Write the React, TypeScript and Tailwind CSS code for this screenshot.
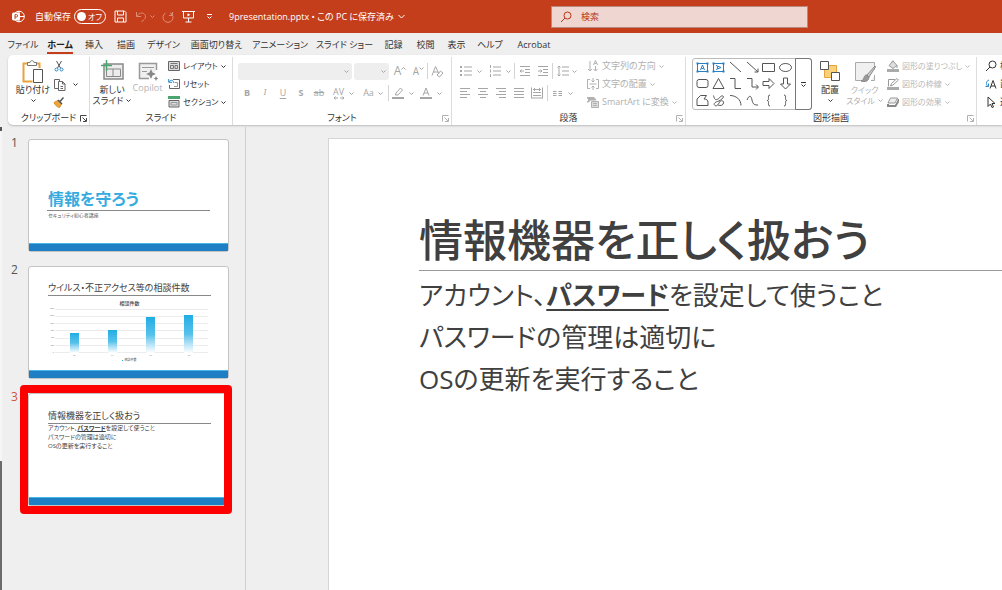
import type { ReactNode } from "react"

const tabs = [
  { label: "ファイル", width: "w-[38px]" },
  { label: "ホーム", width: "w-[36px]", active: true },
  { label: "挿入", width: "w-[32px]" },
  { label: "描画", width: "w-[32px]" },
  { label: "デザイン", width: "w-[43px]" },
  { label: "画面切り替え", width: "w-[63px]" },
  { label: "アニメーション", width: "w-[64px]" },
  { label: "スライド ショー", width: "w-[65px]" },
  { label: "記録", width: "w-[33px]" },
  { label: "校閲", width: "w-[31px]" },
  { label: "表示", width: "w-[31px]" },
  { label: "ヘルプ", width: "w-[36px]" },
  { label: "Acrobat", width: "w-[52px]" },
]

const chartValues = [
  { name: "R3", value: 540 },
  { name: "R4", value: 640 },
  { name: "R5", value: 990 },
  { name: "R6", value: 1040 },
]

const chartTicks = [1200, 1000, 800, 600, 400, 200, 0]

type IconProps = { children: ReactNode; className?: string; box?: string }

function Icon({ children, className = "size-3", box = "0 0 12 12" }: IconProps) {
  return (
    <svg viewBox={box} className={`shrink-0 ${className}`} fill="none" stroke="currentColor" aria-hidden="true">
      {children}
    </svg>
  )
}

function Chevron({ className = "" }: { className?: string }) {
  return (
    <Icon className={`size-[5px] ${className}`} box="0 0 5 5">
      <path d="M.5 1.5l2 2 2-2" />
    </Icon>
  )
}

function Tool({ label, className, children }: { label: string; className: string; children: ReactNode }) {
  return (
    <button type="button" aria-label={label} className={`flex h-4 shrink-0 items-center justify-center ${className}`}>
      {children}
    </button>
  )
}

function Divider() {
  return <span className="h-4 w-px shrink-0 bg-[#d4d4d4]" />
}

type GroupProps = { label: string; className: string; launcher?: "dark" | "light"; children: ReactNode }

function Group({ label, className, launcher, children }: GroupProps) {
  return (
    <section className={`flex shrink-0 flex-col border-r border-[#dcdcdc] ${className}`} aria-label={label}>
      <div className="flex h-[54px]">{children}</div>
      <div className="grid h-[14px] grid-cols-[10px_1fr_10px] items-center">
        <span />
        <span className="text-center text-[9px] leading-[14px]">{label}</span>
        {launcher && (
          <button
            type="button"
            aria-label={`${label}の詳細`}
            className={`mr-[2px] justify-self-end ${launcher === "dark" ? "text-[#444]" : "text-[#b0b0b0]"}`}
          >
            <Icon className="size-[7px]" box="0 0 7 7">
              <path d="M6.5 .5H.5V6.5M2.5 2.5L6 6M6.5 3v3.5H3" />
            </Icon>
          </button>
        )}
      </div>
    </section>
  )
}

function RowButton({ icon, label, arrow = true }: { icon: ReactNode; label: string; arrow?: boolean }) {
  return (
    <button type="button" className="flex h-[18px] shrink-0 items-center gap-[3px] whitespace-nowrap">
      {icon}
      <span>{label}</span>
      {arrow && <Chevron />}
    </button>
  )
}

function TitleBar() {
  return (
    <header className="flex h-[33px] shrink-0 items-center bg-[#c43e1c] text-[9px] text-white">
      <Icon className="ml-3 size-[13px]" box="0 0 13 13">
        <circle cx="7" cy="6.5" r="5.3" />
        <path d="M7 1v5.5h5.3M7 6.5v5.3" />
        <rect x=".5" y="3" width="7" height="7" rx="1" fill="white" />
        <path d="M3 9V4.6h1.4a1.2 1.2 0 010 2.4H3" stroke="#c43e1c" />
      </Icon>
      <label htmlFor="autosave" className="ml-[10px] w-[39px] whitespace-nowrap">
        自動保存
      </label>
      <span className="flex h-[15px] w-8 items-center rounded-full border border-white">
        <input
          id="autosave"
          type="checkbox"
          role="switch"
          className="ml-[2px] size-[9px] shrink-0 appearance-none rounded-full bg-white"
        />
        <span className="ml-[2px] whitespace-nowrap text-[8px]">オフ</span>
      </span>
      <Tool label="上書き保存" className="ml-[7px] w-[15px]">
        <Icon className="size-[13px]" box="0 0 13 13">
          <path d="M1 1h9.5L12 2.5V12H1zM3.5 1v4h6V1M3.5 12V8h6v4" />
        </Icon>
      </Tool>
      <Tool label="元に戻す" className="ml-[6px] w-[14px] text-[#e08d77]">
        <Icon>
          <path d="M1.5 1v4.5H6M1.8 5.2C4 1.8 7.5 1.2 9.3 3c2 2 1.300 4.200-.8 6L6.500 11" />
        </Icon>
      </Tool>
      <Chevron className="ml-[2px] text-[#e08d77]" />
      <Tool label="やり直し" className="ml-[6px] w-[14px] text-[#e08d77]">
        <Icon>
          <path d="M10.500 1v3.500H7M3.500 2A5 5 0 108.500 2l2 2.300" />
        </Icon>
      </Tool>
      <Tool label="最初から開始" className="ml-[6px] w-[14px]">
        <Icon className="size-[13px]" box="0 0 13 13">
          <path d="M0 1.500h13M1.500 1.500v6.500h10V1.500M6.500 8v4M3.500 12h6" />
          <path d="M5.500 3.200v3.200L8.300 4.800z" fill="currentColor" stroke="none" />
        </Icon>
      </Tool>
      <Tool label="クイック アクセス" className="ml-[6px] w-4">
        <Icon className="size-[7px]" box="0 0 7 7">
          <path d="M1 1.500h5M1.500 3.500l2 2 2-2" />
        </Icon>
      </Tool>
      <button type="button" className="ml-3 flex w-[322px] items-center gap-1 whitespace-nowrap">
        9presentation.pptx • この PC に保存済み
        <Icon className="size-[7px]" box="0 0 7 7">
          <path d="M.5 2l3 3 3-3" />
        </Icon>
      </button>
      <label className="flex h-[22px] w-[257px] items-center gap-[9px] border border-[#b98a7d] bg-[#efd6d1] px-2 text-[#b7371a]">
        <Icon>
          <circle cx="7.500" cy="4.500" r="3.500" />
          <path d="M5 7L1 11" />
        </Icon>
        <input
          type="search"
          aria-label="検索"
          placeholder="検索"
          className="min-w-0 flex-1 bg-transparent outline-none placeholder:text-[#b7371a]"
        />
      </label>
    </header>
  )
}

function TabStrip() {
  return (
    <nav className="flex h-[22px] shrink-0 items-center pl-1 pt-px text-[9px] text-[#333]">
      {tabs.map((tab) => (
        <button
          key={tab.label}
          type="button"
          className={`flex shrink-0 justify-center whitespace-nowrap ${tab.width} ${tab.active ? "font-bold text-[#222]" : ""}`}
        >
          <span className={`leading-[14px] ${tab.active ? "border-b-2 border-[#c43e1c] pt-[2px]" : ""}`}>
            {tab.label}
          </span>
        </button>
      ))}
    </nav>
  )
}

function ClipboardGroup() {
  return (
    <Group label="クリップボード" className="w-[82px]" launcher="dark">
      <button type="button" className="ml-[6px] flex w-[38px] flex-col items-center pt-[3px] text-[9px] leading-3">
        <Icon className="h-6 w-[22px]" box="0 0 22 24">
          <path d="M5.500 3.500H1.500v18h9M14.500 3.500h3V8" stroke="#e8a33d" strokeWidth="2" />
          <path d="M5.500 5.500v-3h2.500C8.500 0 11.500 0 12 2.500h2.500v3z" stroke="#777" fill="white" />
          <path d="M11.500 9.500h9v13h-9z" stroke="#555" fill="white" />
        </Icon>
        <span className="whitespace-nowrap">貼り付け</span>
        <Chevron className="mt-[2px]" />
      </button>
      <div className="flex flex-col">
        <Tool label="切り取り" className="h-[18px] w-[14px]">
          <Icon>
            <path d="M3.500 1L7.500 8M8.500 1L4.500 8" stroke="#555" />
            <circle cx="3.500" cy="9.500" r="1.500" stroke="#2b88c8" />
            <circle cx="8.500" cy="9.500" r="1.500" stroke="#2b88c8" />
          </Icon>
        </Tool>
        <Tool label="コピー" className="h-[18px] w-[14px]">
          <Icon className="size-[13px]" box="0 0 13 13">
            <path
              d="M5 10.500H1.500v-9h5V3M5.500 3.500h4l2.500 2.500v6.500H5.500zM9.500 3.500V6H12M7.500 8.500H10M7.500 10.500H10"
              stroke="#666"
            />
          </Icon>
        </Tool>
        <Tool label="書式のコピー" className="h-[18px] w-[14px]">
          <Icon>
            <path d="M1 6.500l4-2 3.500 3.500-2 3.500C4 11 2 9 1 6.500z" fill="#eda63d" stroke="#d98a1f" />
            <path d="M5 4l4 4M7 5.500L10.500 1.500" stroke="#555" strokeWidth="1.500" />
          </Icon>
        </Tool>
      </div>
      <Chevron className="ml-[7px] mt-[25px]" />
    </Group>
  )
}

function SlidesGroup() {
  return (
    <Group label="スライド" className="w-[143px]">
      <button type="button" className="ml-1 flex w-[36px] flex-col items-center pt-[3px] text-[9px] leading-[11px]">
        <Icon className="h-[22px] w-[23px]" box="0 0 23 22">
          <path d="M3 4h19v15H3z" fill="#ececec" stroke="#888" strokeWidth="1.500" />
          <path d="M5 9h15M12 9v8M5.500 9.500v7h14v-7" stroke="#888" />
          <path d="M5.500 0v11M0 5.500h11" stroke="#4ba56f" strokeWidth="1.500" />
        </Icon>
        <span className="mt-[2px]">新しい</span>
        <span className="flex items-center gap-[3px] whitespace-nowrap">
          スライド
          <Chevron />
        </span>
      </button>
      <button type="button" className="flex w-[35px] flex-col items-center pt-1 text-[9px] leading-3 text-[#b4b4b4]">
        <Icon className="h-[21px] w-5" box="0 0 20 21">
          <path d="M18.500 9V2.500h-17v15H11" stroke="#999" strokeWidth="1.500" fill="#f0f0f0" />
          <path d="M4 6.500h12M4 10.500h5" stroke="#999" />
          <path d="M13 8l1.500 3.500L18 13l-3.500 1.500L13 18l-1.500-3.500L8 13l3.500-1.500z" fill="#888" stroke="none" />
          <path d="M18 15l.8 1.700 1.700.8-1.700.8L18 20l-.8-1.700-1.700-.8 1.700-.8z" fill="#888" stroke="none" />
        </Icon>
        <span>Copilot</span>
      </button>
      <div className="ml-[3px] flex flex-col text-[8px]">
        <RowButton
          label="レイアウト"
          icon={
            <Icon>
              <path d="M.5 1.500h11v9H.5z" fill="#ddd" stroke="#666" />
              <path d="M2.500 3.500h7M2.500 5.500h3v3h-3zM7 5.500h2.500v3H7z" stroke="#777" />
            </Icon>
          }
        />
        <RowButton
          label="リセット"
          arrow={false}
          icon={
            <Icon>
              <path d="M5 1.500h6.500v9H1.500V7" stroke="#666" />
              <path d="M6 8.500h3.500v-4H7" stroke="#999" />
              <path d="M.7 1v3.300H4M1 4C2.500 1.500 5 1.500 6 5" stroke="#2b88c8" />
            </Icon>
          }
        />
        <RowButton
          label="セクション"
          icon={
            <Icon>
              <path d="M0 1.500h12" stroke="#4ba56f" strokeWidth="3" />
              <path d="M1 4.500h10v6.500H1z" fill="#ddd" stroke="#666" />
              <path d="M3 6.500h6v2.500H3z" stroke="#999" />
            </Icon>
          }
        />
      </div>
    </Group>
  )
}

function FontGroup() {
  return (
    <Group label="フォント" className="w-[219px]" launcher="light">
      <div className="flex flex-col pl-[5px] pt-[5px] text-[#a6a6a6]">
        <div className="flex h-[18px] items-center">
          <select
            aria-label="フォント名"
            disabled
            className="h-[17px] w-[114px] appearance-none rounded-[3px] bg-[#eee]"
          />
          <Chevron className="-ml-2 mr-[5px]" />
          <select
            aria-label="フォント サイズ"
            disabled
            className="h-[17px] w-[35px] appearance-none rounded-[3px] bg-[#eee]"
          />
          <Chevron className="-ml-2 mr-1" />
          <Tool label="フォント サイズの拡大" className="w-[20px]">
            <span className="text-[12px]">A</span>
            <Chevron className="mb-[6px] rotate-180" />
          </Tool>
          <Tool label="フォント サイズの縮小" className="w-[17px]">
            <span className="text-[10px]">A</span>
            <Chevron className="mb-[6px]" />
          </Tool>
          <Divider />
          <Tool label="書式のクリア" className="w-[19px]">
            <Icon className="size-[13px]" box="0 0 13 13">
              <path d="M1 10.500L4.500 1.500 8 9M2.500 7H7M6 10l3.500-4 2.500 2-3.500 4z" />
            </Icon>
          </Tool>
        </div>
        <div className="mt-1 flex h-[18px] items-center text-[9px]">
          <Tool label="太字" className="w-[18px]">
            <span className="font-bold">B</span>
          </Tool>
          <Tool label="斜体" className="w-[18px]">
            <span className="font-serif italic">I</span>
          </Tool>
          <Tool label="下線" className="w-[18px]">
            <span className="underline underline-offset-2">U</span>
          </Tool>
          <Tool label="文字の影" className="w-[18px]">
            <span className="font-bold">S</span>
          </Tool>
          <Tool label="取り消し線" className="w-[18px]">
            <span className="line-through">ab</span>
          </Tool>
          <Tool label="文字の間隔" className="w-[30px] gap-1">
            <span className="flex flex-col items-center leading-[9px]">
              AV
              <Icon className="h-1 w-3" box="0 0 12 4">
                <path d="M2.500 .5L1 2l1.500 1.500M1 2h4M9.500 .5L11 2 9.500 3.500M11 2H7" />
              </Icon>
            </span>
            <Chevron />
          </Tool>
          <Tool label="文字種の変換" className="w-[30px] gap-1">
            <span>Aa</span>
            <Chevron />
          </Tool>
          <Divider />
          <Tool label="蛍光ペン" className="w-[28px] gap-[5px]">
            <Icon>
              <path d="M4 6l4.500-5L10.500 3 6 8H3.500zM3 8l1-1" />
              <path d="M0 11h12" strokeWidth="2" />
            </Icon>
            <Chevron />
          </Tool>
          <Tool label="フォントの色" className="w-[28px] gap-[5px]">
            <Icon>
              <path d="M3 8.500L6 1l3 7.500M4 6h4" />
              <path d="M0 11h12" strokeWidth="2" />
            </Icon>
            <Chevron />
          </Tool>
        </div>
      </div>
    </Group>
  )
}

const alignments = [
  { label: "左揃え", d: "M1 1.500h10M1 4.500h7M1 7.500h10M1 10.500h7" },
  { label: "中央揃え", d: "M1 1.500h10M3 4.500h6M1 7.500h10M3 10.500h6" },
  { label: "右揃え", d: "M1 1.500h10M4 4.500h7M1 7.500h10M4 10.500h7" },
  { label: "両端揃え", d: "M1 1.500h10M1 4.500h10M1 7.500h10M1 10.500h10" },
  { label: "均等割り付け", d: "M.5 .5v11M11.500 .5v11M2 2.500h8M2 5.500h8M2 8.500h8M3.500 1v3M8.500 1v3M1 11h10" },
]

function ParagraphGroup() {
  return (
    <Group label="段落" className="w-[234px]" launcher="light">
      <div className="flex w-[135px] shrink-0 flex-col pl-1 pt-[5px] text-[#a6a6a6]">
        <div className="flex h-[18px] items-center">
          <Tool label="箇条書き" className="w-[29px] gap-[5px]">
            <Icon>
              <path d="M4 2h8M4 6h8M4 10h8" />
              <path d="M0 2h2M0 6h2M0 10h2" strokeWidth="2" />
            </Icon>
            <Chevron />
          </Tool>
          <Tool label="段落番号" className="w-[29px] gap-[5px]">
            <Icon>
              <path d="M4 2h8M4 6h8M4 10h8M1.500 0v3M1.500 4.500v3M1.500 9v3" />
            </Icon>
            <Chevron />
          </Tool>
          <Divider />
          <Tool label="インデントを減らす" className="w-[19px]">
            <Icon>
              <path d="M1 1.500h10M6 4.500h5M6 7.500h5M1 10.500h10M5 6H1M2.500 4.500L1 6l1.500 1.500" />
            </Icon>
          </Tool>
          <Tool label="インデントを増やす" className="w-[18px]">
            <Icon>
              <path d="M1 1.500h10M6 4.500h5M6 7.500h5M1 10.500h10M1 6h4M3.500 4.500L5 6 3.500 7.500" />
            </Icon>
          </Tool>
          <Divider />
          <Tool label="行間" className="w-[28px] gap-[3px]">
            <Icon>
              <path d="M5 2h7M5 6h7M5 10h7M2 1v10M.5 2.500L2 1l1.500 1.500M.5 9.500L2 11l1.500-1.500" />
            </Icon>
            <Chevron />
          </Tool>
        </div>
        <div className="mt-1 flex h-[18px] items-center">
          {alignments.map((item) => (
            <Tool key={item.label} label={item.label} className="w-[18px]">
              <Icon>
                <path d={item.d} />
              </Icon>
            </Tool>
          ))}
          <span className="w-px" />
          <Divider />
          <Tool label="段組み" className="w-[29px] gap-[5px]">
            <Icon className="size-[11px]" box="0 0 11 11">
              <path d="M1 3.500h3.500M6.500 3.500H10M1 5.500h3.500M6.500 5.500H10M1 7.500h3.500M6.500 7.500H10" />
            </Icon>
            <Chevron />
          </Tool>
        </div>
      </div>
      <div className="flex flex-col text-[9px] text-[#b0b0b0]">
        <RowButton
          label="文字列の方向"
          icon={
            <Icon>
              <path d="M3 1v10M1 9l2 2 2-2M8.500 6v5M6.500 9l2 2 2-2M6.500 5l2-4.500 2 4.500M7.500 3.500h2" />
            </Icon>
          }
        />
        <RowButton
          label="文字の配置"
          icon={
            <Icon>
              <path d="M3 1.500H.5v9H3M9 1.500h2.500v9H9M2.500 6h7M6 0v4M4.500 2.500L6 4l1.500-1.500M6 12V8M4.500 9.500L6 8l1.500 1.500" />
            </Icon>
          }
        />
        <RowButton
          label="SmartArt に変換"
          icon={
            <Icon>
              <path d="M0 1.500h7l2 2.500H3.500L1.500 6H0L2 4z" fill="currentColor" />
              <path d="M4.500 5.500h7v6h-7zM6 7.500h4M6 9.500h4" fill="#ddd" />
            </Icon>
          }
        />
      </div>
    </Group>
  )
}

const shapes = [
  { label: "横書きテキスト", blue: true, d: "M1.500 2.500h10v8h-10zM4.500 9L6.500 4l2 5M5.500 7.500h2" },
  { label: "縦書きテキスト", blue: true, d: "M1.500 2.500h10v8h-10zM4 4.500l5 2-5 2M5.500 5.500v2" },
  { label: "線", d: "M1 1l11 10" },
  { label: "矢印", d: "M1 1l11 10M12 7.500V11H8.500" },
  { label: "四角形", d: "M.5 2.500h12v8H.5z" },
  { label: "楕円", d: "M.5 6.500a6 4 0 0112 0a6 4 0 01-12 0z" },
  { label: "角丸四角形", d: "M3 2.500h7a2 2 0 012 2v4a2 2 0 01-2 2H3a2 2 0 01-2-2v-4a2 2 0 012-2z" },
  { label: "三角形", d: "M6.500 1.500l5.500 10H1z" },
  { label: "カギ線", d: "M1 1.500h5v10h6" },
  { label: "カギ線矢印", d: "M1 1.500h5v8.500h6M10 7.500l2.500 2.500-2.500 2.500" },
  { label: "右矢印", d: "M1 4.500h6v-3l5 5-5 5v-3H1z" },
  { label: "下矢印", d: "M4.500 1v6h-3l5 5 5-5h-3V1z" },
  { label: "フリーフォーム", d: "M1 11.500V5l3.500-3.500h6L8 5c2.500 0 4 1 4 3.500v3z" },
  { label: "フリーハンド", d: "M1.500 1.500C2.500 5 3 6 5 5.500S9 1 11 2 8 7 5.500 7.500 1 10 3 11.500 7 9 8 7.500s4-1 3.500 1.500S8.500 12 6 11" },
  { label: "円弧", d: "M1 1.500c6 0 11 4 11 10" },
  { label: "曲線", d: "M1 6c2-5 4-5 5 0s3 5 6 5" },
  { label: "左中かっこ", d: "M8 1C6 1 6.500 3 6.500 4.500S6 6.500 5 6.500c1 0 1.500.5 1.500 2S6 12 8 12" },
  { label: "右中かっこ", d: "M5 1c2 0 1.500 2 1.500 3.500s.5 2 1.500 2c-1 0-1.500.5-1.500 2S7 12 5 12" },
]

function DrawingGroup() {
  return (
    <Group label="図形描画" className="w-[291px]" launcher="light">
      <div className="ml-[6px] mt-px flex h-[52px] w-[120px] shrink-0 rounded-[3px] border border-[#bbb]">
        <div className="grid flex-1 grid-cols-6 grid-rows-3 place-items-center px-px">
          {shapes.map((shape) => (
            <button
              key={shape.label}
              type="button"
              aria-label={shape.label}
              className={shape.blue ? "text-[#2b7fc0]" : "text-[#555]"}
            >
              <Icon className="size-[13px]" box="0 0 13 13">
                <path d={shape.d} />
                {shape.blue && <path d="M.5 2.500h2M10.500 2.500h2M.5 10.500h2M10.500 10.500h2" strokeWidth="2" />}
              </Icon>
            </button>
          ))}
        </div>
        <button
          type="button"
          aria-label="その他の図形"
          className="-my-px -mr-px flex w-[17px] items-center justify-center rounded-r-[3px] border border-[#777]"
        >
          <Icon className="size-[7px]" box="0 0 7 7">
            <path d="M1 1.500h5M1.500 3.500l2 2 2-2" />
          </Icon>
        </button>
      </div>
      <button type="button" className="ml-1 flex w-7 shrink-0 flex-col items-center pt-[3px] text-[9px] leading-3">
        <Icon className="h-6 w-[21px]" box="0 0 21 24">
          <path d="M4.500 5.500h12v12h-12z" fill="#fbd27c" stroke="#e8a33d" />
          <path d="M.5 1.500h8v8h-8zM11.500 12.500h8v8h-8z" fill="white" stroke="#555" />
        </Icon>
        <span>配置</span>
        <Chevron className="mt-[2px]" />
      </button>
      <button
        type="button"
        className="flex w-[41px] shrink-0 flex-col items-center pt-1 text-[8px] leading-[11px] text-[#b0b0b0]"
      >
        <Icon className="h-[22px] w-[22px]" box="0 0 22 22">
          <path d="M12 19.500H1.500v-18h19v7M20.500 14v5.500H17" fill="#f0f0f0" stroke="#aaa" />
          <path d="M21 5l-8 9 2 2 6.500-10z" fill="#ccc" stroke="#888" />
          <path d="M12.500 14c-3 0-2 5-5.500 6 4 1.500 8 0 8-4z" fill="#999" stroke="#888" />
        </Icon>
        <span className="mt-px whitespace-nowrap">クイック</span>
        <span className="flex items-center gap-[3px] whitespace-nowrap">
          スタイル
          <Chevron />
        </span>
      </button>
      <div className="ml-[2px] flex flex-col text-[8px] text-[#b8b8b8]">
        <RowButton
          label="図形の塗りつぶし"
          icon={
            <Icon>
              <path d="M2 5.500L6 1l4 4.500-4 3zM10 5v3M4 3l2-2.500" fill="#ddd" stroke="#999" />
              <path d="M0 10.500h12" strokeWidth="3" stroke="#aaa" />
            </Icon>
          }
        />
        <RowButton
          label="図形の枠線"
          icon={
            <Icon>
              <path d="M8 1.500H1.500v7M3.500 8l1-2.500L10 .5l1.500 1.500L6 7z" stroke="#999" />
              <path d="M0 10.500h12" strokeWidth="3" stroke="#aaa" />
            </Icon>
          }
        />
        <RowButton
          label="図形の効果"
          icon={
            <Icon>
              <path d="M3.500 2h7l-2.500 5H1z" fill="#eee" stroke="#999" />
              <path d="M1 8v2h7.500L11.500 5V3" stroke="#888" strokeWidth="2" />
            </Icon>
          }
        />
      </div>
    </Group>
  )
}

function EditGroup() {
  return (
    <section className="flex min-w-0 flex-1 flex-col overflow-hidden pl-2 text-[9px]" aria-label="編集">
      <RowButton
        label="検索"
        arrow={false}
        icon={
          <Icon>
            <circle cx="7.500" cy="4.500" r="3.500" />
            <path d="M5 7L1 11" />
          </Icon>
        }
      />
      <RowButton
        label="置換"
        icon={
          <Icon>
            <path d="M5 10.500l3-8 3 8M6 8h4" />
            <path d="M4 2C1 3 .5 6 3 8.500M3.500 5.500v3H.5" stroke="#2b88c8" />
          </Icon>
        }
      />
      <RowButton
        label="選択"
        icon={
          <Icon>
            <path d="M3 1v9.500l2.500-2.500L7 11.500 8.500 11 7 7.500h3z" />
          </Icon>
        }
      />
    </section>
  )
}

function SlideBand() {
  return <div className="mt-auto h-2 shrink-0 border-t border-[#4bb4e6] bg-[#1f7fc4]" />
}

function SlideChart() {
  return (
    <figure className="mt-1 flex flex-col">
      <figcaption className="text-center text-[5px] font-medium leading-[7px] text-[#444]">相談件数</figcaption>
      <div className="mt-[2px] flex h-[44px] pr-[3px]">
        <div className="-my-px flex w-[6px] flex-col justify-between text-right text-[2px] leading-[2px] text-[#777]">
          {chartTicks.map((tick) => (
            <span key={tick}>{tick}</span>
          ))}
        </div>
        <div className="ml-px grid flex-1">
          <div className="col-start-1 row-start-1 flex flex-col justify-between">
            {chartTicks.map((tick) => (
              <span key={tick} className="h-px bg-[#ececec]" />
            ))}
          </div>
          <div className="col-start-1 row-start-1 flex items-end justify-around">
            {chartValues.map((item) => (
              <span
                key={item.name}
                className="w-[9px] bg-linear-to-b from-[#1cade4] via-[#55c2eb] to-white"
                style={{ height: `${(item.value / 1200) * 100}%` }}
              />
            ))}
          </div>
        </div>
      </div>
      <div className="ml-[7px] mr-[3px] flex justify-around text-[2px] leading-[5px] text-[#777]">
        {chartValues.map((item) => (
          <span key={item.name}>{item.name}</span>
        ))}
      </div>
      <div className="flex items-center justify-center gap-px text-[3px] leading-1 text-[#555]">
        <span className="size-px bg-[#1cade4]" />
        相談件数
      </div>
    </figure>
  )
}

type ThumbProps = { index: number; selected?: boolean; children: ReactNode }

function Thumbnail({ index, selected, children }: ThumbProps) {
  return (
    <li className="flex items-start">
      <span className={`w-[17px] text-[12px] leading-2 ${selected ? "text-[#d0543c]" : "text-[#555]"}`}>{index}</span>
      <button
        type="button"
        aria-label={`スライド ${index}`}
        className="relative flex h-[113px] w-[201px] flex-col rounded-[3px] border border-[#c4c4c4] bg-white text-left"
      >
        {children}
        <SlideBand />
        {selected && (
          <span className="absolute -bottom-[9px] -left-[9px] -right-1 -top-[9px] rounded-[4px] border-8 border-[#fe0000]" />
        )}
      </button>
    </li>
  )
}

function ThumbnailPane() {
  return (
    <aside className="w-[244px] shrink-0 border-r border-[#d0d0d0] pl-[9px] pt-3">
      <ol className="flex flex-col gap-[14px]">
        <Thumbnail index={1}>
          <div className="mx-[18px] mt-[48px] border-b border-[#888] pl-px text-[16px] font-bold leading-[22px] text-[#36abe0]">
            情報を守ろう
          </div>
          <p className="ml-[19px] text-[5px] leading-[9px] text-[#555]">セキュリティ初心者講座</p>
        </Thumbnail>
        <Thumbnail index={2}>
          <div className="mx-[17px] mt-[13px] pl-[2px]">
            <p className="border-b border-[#888] text-[9px] leading-[15px] text-[#404040]">
              ウイルス・不正アクセス等の相談件数
            </p>
            <SlideChart />
          </div>
        </Thumbnail>
        <Thumbnail index={3} selected>
          <div className="mx-[17px] mt-[14px] pl-[2px] text-[#404040]">
            <p className="border-b border-[#888] text-[9px] leading-[15px]">情報機器を正しく扱おう</p>
            <div className="text-[6px] leading-[9px]">
              <p>
                アカウント、<b className="underline">パスワード</b>を設定して使うこと
              </p>
              <p>パスワードの管理は適切に</p>
              <p>OSの更新を実行すること</p>
            </div>
          </div>
        </Thumbnail>
      </ol>
    </aside>
  )
}

export default function App() {
  return (
    <div className="flex h-screen flex-col overflow-hidden bg-[#efefef] font-['Open_Sans','Noto_Sans_CJK_JP',sans-serif] text-[#333] [font-feature-settings:'palt']">
      <TitleBar />
      <TabStrip />
      <div className="ml-2 flex h-[70px] shrink-0 overflow-hidden rounded-l-[5px] bg-white pt-[2px] shadow-[0_1px_2px_#bbb]">
        <ClipboardGroup />
        <SlidesGroup />
        <FontGroup />
        <ParagraphGroup />
        <DrawingGroup />
        <EditGroup />
      </div>
      <main className="flex min-h-0 flex-1 pt-[2px]">
        {/* window edge behind the pane */}
        <div className="flex w-[2px] shrink-0 flex-col bg-[#f6f6f6]">
          <span className="h-1 bg-[#555]" />
          <span className="mt-[330px] flex-1 bg-[#6b6b6b]" />
        </div>
        <ThumbnailPane />
        <article className="ml-[82px] mt-[11px] min-w-0 flex-1 border-l border-t border-[#d6d6d6] bg-white pl-[90px] pt-[71px] text-[#404040]">
          <h1 className="whitespace-nowrap border-b border-[#999] text-[44px] font-medium leading-[60px]">
            情報機器を正しく扱おう
          </h1>
          <div className="whitespace-nowrap pt-[3px] text-[26px] leading-[42px]">
            <p>
              アカウント、<b className="underline decoration-2 underline-offset-4">パスワード</b>を設定して使うこと
            </p>
            <p>パスワードの管理は適切に</p>
            <p>OSの更新を実行すること</p>
          </div>
        </article>
      </main>
    </div>
  )
}
